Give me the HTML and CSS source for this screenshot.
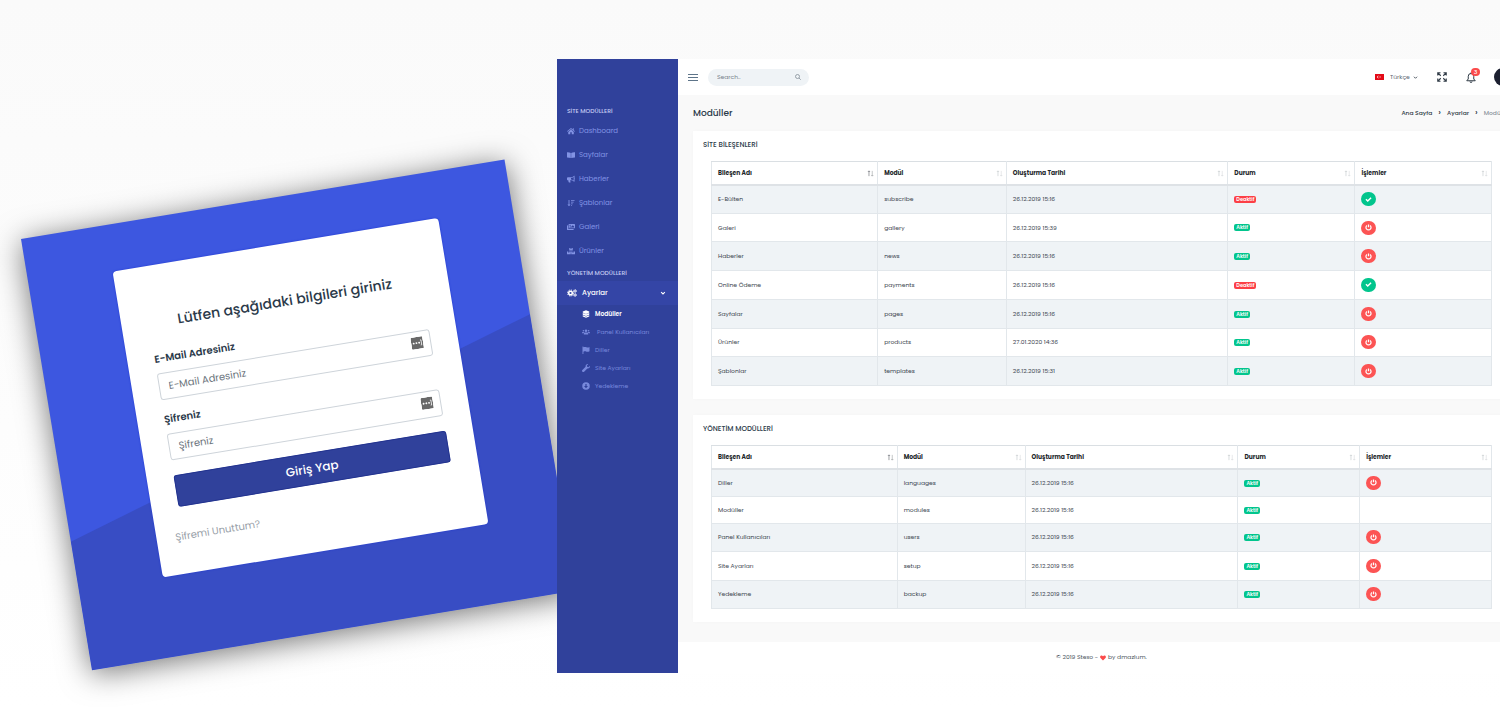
FILE: index.html
```html
<!DOCTYPE html>
<html lang="tr">
<head>
<meta charset="utf-8">
<title>Modüller</title>
<link rel="stylesheet" href="styles.css">
</head>
<body>
<svg class="sprite" aria-hidden="true">
  <symbol id="i-home" viewBox="0 0 18 16"><path d="M9 1 0 8.600l1.100 1.300L9 3.400l7.900 6.500L18 8.600l-2.800-2.300V2h-2.200v2.400zM9 4.800 2.800 10v5.200h4.500v-4.400h3.400v4.400h4.500V10z"/></symbol>
  <symbol id="i-book" viewBox="0 0 18 16"><path d="M8.500 3.300C6.500 2 3.500 1.700.6 1.800A.6.6 0 0 0 0 2.400v10.400c0 .4.300.6.600.6 2.700.1 5.700.4 7.900 1.600zM9.500 3.300c2-1.300 5-1.600 7.900-1.500.3 0 .6.300.6.600v10.400c0 .4-.3.600-.6.600-2.700.1-5.700.4-7.900 1.600z"/></symbol>
  <symbol id="i-horn" viewBox="0 0 18 16"><path fill-rule="evenodd" d="M17 6.500V1.800c0-.8-.7-1.200-1.300-.8C13.500 2.800 11 4 8 4H2C.9 4 0 4.900 0 6v3c0 1.100.9 2 2 2h1c-.1 1.500.3 3 1 4.300.2.400.5.700 1 .7h2.300c.8 0 1.200-.9.800-1.500C7.400 13.500 7 12.200 7.200 11H8c3 0 5.500 1.200 7.700 3 .6.400 1.300 0 1.300-.8V8.500a1.200 1.200 0 0 0 0-2zM15 11.500C13 10.200 10.700 9.300 9 9.200V5.800c1.700-.1 4-1 6-2.300z"/></symbol>
  <symbol id="i-sort" viewBox="0 0 18 16"><path d="M3.500 1h2v10.500H8L4.500 15.500 1 11.500h2.500zM9 1h8v2H9zM9 5h6v2H9zM9 9h4v2H9zM9 13h2v2H9z"/></symbol>
  <symbol id="i-images" viewBox="0 0 18 16"><path fill-rule="evenodd" d="M5 1h11.500c.8 0 1.500.7 1.500 1.500v7c0 .8-.7 1.500-1.500 1.500H5c-.8 0-1.500-.7-1.500-1.500v-7C3.500 1.700 4.200 1 5 1zm.5 8h10.500V7l-3-3-4 4-1.500-1.500-2 1.500zM7 3a1.300 1.300 0 1 0 0 2.600A1.300 1.300 0 0 0 7 3zM1.500 4H2.300v6.500c0 1 .8 1.800 1.800 1.800H15V13.500c0 .8-.7 1.500-1.500 1.500h-12C.7 15 0 14.300 0 13.500v-8C0 4.700.7 4 1.500 4z"/></symbol>
  <symbol id="i-boxes" viewBox="0 0 18 16"><path d="M5 1h2.800v2.800l1.200-.7 1.200.7V1H13v6H5zM0 9h2.800v2.800l1.200-.7 1.200.7V9H8.500v6.500H0zM9.500 9h2.800v2.800l1.200-.7 1.200.7V9H18v6.500H9.500z"/></symbol>
  <symbol id="i-cogs" viewBox="0 0 20 16"><g fill="none" stroke="currentColor"><circle cx="7" cy="8" r="3.600" stroke-width="3"/><circle cx="7" cy="8" r="6" stroke-width="2" stroke-dasharray="2.500 2.210"/><circle cx="16" cy="4" r="1.900" stroke-width="1.700"/><circle cx="16" cy="4" r="3.200" stroke-width="1.300" stroke-dasharray="1.700 1.650"/><circle cx="16" cy="12" r="1.900" stroke-width="1.700"/><circle cx="16" cy="12" r="3.200" stroke-width="1.300" stroke-dasharray="1.700 1.650"/></g></symbol>
  <symbol id="i-cube" viewBox="0 0 16 16"><path d="M8 .5 14.500 3v2.200L8 7.800 1.500 5.200V3zM1.500 6 8 8.600 14.500 6v3.500L8 12.100 1.500 9.500zM1.500 10.300 8 12.900l6.500-2.600V13L8 15.600 1.500 13z"/></symbol>
  <symbol id="i-users" viewBox="0 0 20 16"><circle cx="10" cy="5" r="3.200"/><circle cx="3.500" cy="5" r="2"/><circle cx="16.500" cy="5" r="2"/><path d="M4.500 14v-1.500C4.500 10 6.500 9 8 9h4c1.500 0 3.500 1 3.500 3.500V14zM0 11V9.500C0 8.500 1 7.800 2 7.800h3l1 .7C4.500 9.200 3.800 10 3.600 11zM20 11V9.500c0-1-1-1.700-2-1.700h-3l-1 .7c1.500.7 2.200 1.500 2.400 2.500z"/></symbol>
  <symbol id="i-flag" viewBox="0 0 16 16"><path d="M1 1h1.800v1.500C5 1.500 7 1.800 9 2.700c2 .7 4 .3 6-.7v8.500c-2 1.200-4 1.500-6 .8-2-.8-4-1-6.200.2V16H1z"/></symbol>
  <symbol id="i-wrench" viewBox="0 0 16 16"><path d="M15.700 3.700 13 6.300l-2.700-.6L9.700 3l2.700-2.700C9.500-.5 6.800 2 7.200 5.300L.7 11.800c-2 2.200 1.300 5.500 3.500 3.500l6.500-6.500C14 9.300 16.500 6.600 15.700 3.700z"/></symbol>
  <symbol id="i-down" viewBox="0 0 16 16"><path fill-rule="evenodd" d="M8 .5a7.500 7.500 0 1 1 0 15 7.500 7.500 0 0 1 0-15zM6.800 4v4H4l4 4.500L12 8H9.200V4z"/></symbol>
  <symbol id="i-check" viewBox="0 0 16 16"><path d="m1 8.500 2.300-2.300 3 3L12.700 2.800 15 5.100l-8.700 8.700z"/></symbol>
  <symbol id="i-power" viewBox="0 0 16 16"><path d="M4.500 3.200A5.800 5.800 0 1 0 11.500 3.200M8 1v6.500" fill="none" stroke="currentColor" stroke-width="2.800"/></symbol>
  <symbol id="i-chev" viewBox="0 0 16 16"><path d="m3 5.500 5 5 5-5" fill="none" stroke="currentColor" stroke-width="2.800"/></symbol>
  <symbol id="i-heart" viewBox="0 0 16 16"><path d="M8 14.500 1.300 7.800C-1 5 1 1.500 4 1.500c1.700 0 3 .8 4 2 1-1.200 2.300-2 4-2 3 0 5 3.500 2.700 6.300z"/></symbol>
  <symbol id="i-sorter" viewBox="0 0 16 16"><path d="M4.500 14V2M2 4.500 4.500 2 7 4.500"/><path opacity=".6" d="M12 2v12M9.500 11.500 12 14l2.500-2.500"/></symbol>
  <symbol id="i-key" viewBox="0 0 24 24"><rect width="24" height="24" rx="3" fill="#696969"/><circle cx="5" cy="12" r="1.900" fill="#fff"/><circle cx="10.500" cy="12" r="1.900" fill="#fff"/><circle cx="16" cy="12" r="1.900" fill="#fff"/><path d="M18.500 7h2v10h-2" fill="none" stroke="#fff" stroke-width="1.500"/></symbol>
</svg>

<div class="stage">
  <section class="login">
    <form class="login-card">
      <h1 class="login-title">Lütfen aşağıdaki bilgileri giriniz</h1>
      <label class="login-label" for="mail">E-Mail Adresiniz</label>
      <div class="login-field">
        <input class="login-input" id="mail" type="email" placeholder="E-Mail Adresiniz">
        <svg class="key"><use href="#i-key"/></svg>
      </div>
      <label class="login-label" for="pass">Şifreniz</label>
      <div class="login-field">
        <input class="login-input" id="pass" type="password" placeholder="Şifreniz">
        <svg class="key"><use href="#i-key"/></svg>
      </div>
      <button class="login-btn" type="button">Giriş Yap</button>
      <a class="forgot" href="#">Şifremi Unuttum?</a>
    </form>
  </section>

  <div class="dash">
    <nav class="side">
      <h2 class="side-head">SİTE MODÜLLERİ</h2>
      <a class="side-link" href="#"><svg class="ico"><use href="#i-home"/></svg>Dashboard</a>
      <a class="side-link" href="#"><svg class="ico"><use href="#i-book"/></svg>Sayfalar</a>
      <a class="side-link" href="#"><svg class="ico"><use href="#i-horn"/></svg>Haberler</a>
      <a class="side-link" href="#"><svg class="ico"><use href="#i-sort"/></svg>Şablonlar</a>
      <a class="side-link" href="#"><svg class="ico"><use href="#i-images"/></svg>Galeri</a>
      <a class="side-link" href="#"><svg class="ico"><use href="#i-boxes"/></svg>Ürünler</a>
      <h2 class="side-head">YÖNETİM MODÜLLERİ</h2>
      <a class="side-link open" href="#"><svg class="ico wide"><use href="#i-cogs"/></svg>Ayarlar<svg class="chev"><use href="#i-chev"/></svg></a>
      <a class="sub-link current" href="#"><svg class="ico"><use href="#i-cube"/></svg>Modüller</a>
      <a class="sub-link spaced" href="#"><svg class="ico"><use href="#i-users"/></svg>Panel Kullanıcıları</a>
      <a class="sub-link" href="#"><svg class="ico"><use href="#i-flag"/></svg>Diller</a>
      <a class="sub-link" href="#"><svg class="ico"><use href="#i-wrench"/></svg>Site Ayarları</a>
      <a class="sub-link" href="#"><svg class="ico"><use href="#i-down"/></svg>Yedekleme</a>
    </nav>

    <div class="main">
      <header class="top">
        <button class="icon-btn menu" type="button" aria-label="Menü"><svg viewBox="0 0 10 8"><path d="M0 1.500h10M0 4.500h10M0 7.500h10" fill="none" stroke="#5d7489" stroke-width="1"/></svg></button>
        <form class="search">
          <input class="search-input" type="text" placeholder="Search.." aria-label="Search">
          <button class="icon-btn glass" type="button" aria-label="Ara"><svg viewBox="0 0 12 12"><path d="M5 1a4 4 0 1 1 0 8 4 4 0 0 1 0-8M8 8l3.500 3.500" fill="none" stroke="#7d8893" stroke-width="1.500"/></svg></button>
        </form>
        <div class="top-right">
          <label class="lang"><svg class="tr-flag" viewBox="0 0 18 12"><path fill="#e30a17" d="M0 0h18v12H0z"/><circle cx="7" cy="6" r="2.600" fill="#fff"/><circle cx="7.800" cy="6" r="2.100" fill="#e30a17"/><path fill="#fff" d="m9.500 6 2.600-1-1.600 2.200V4.800L12.100 7z"/></svg>
            <select class="lang-select" aria-label="Dil"><option>Türkçe</option></select><svg class="lang-chev"><use href="#i-chev"/></svg></label>
          <button class="icon-btn full" type="button" aria-label="Tam ekran"><svg viewBox="0 0 20 20"><g fill="none" stroke="#2f3a45" stroke-width="2.200"><path d="M1.500 7V1.500H7M1.500 1.500 7.500 7.500M13 1.500h5.500V7M18.500 1.500l-6 6M1.500 13v5.500H7M1.500 18.500l6-6M18.500 13v5.500H13M18.500 18.500l-6-6"/></g></svg></button>
          <button class="icon-btn bell" type="button" aria-label="Bildirimler"><svg viewBox="0 0 20 22"><path d="M10 1v2M1.500 17.500h17L15.500 14V8.500a5.500 5.500 0 0 0-11 0V14zM8 19a2 2 0 0 0 4 0" fill="none" stroke="#2f3a45" stroke-width="2"/></svg><span class="count">3</span></button>
          <span class="avatar"></span>
        </div>
      </header>

      <main class="content">
        <div class="crumb-row">
          <h1 class="page-title">Modüller</h1>
          <ol class="crumbs"><li><a href="#">Ana Sayfa</a></li><li><a href="#">Ayarlar</a></li><li class="here">Modüller</li></ol>
        </div>

        <section class="card">
          <h2 class="card-title">SİTE BİLEŞENLERİ</h2>
          <table class="grid site">
            <thead><tr>
              <th class="c1 sorted">Bileşen Adı<svg class="sorter"><use href="#i-sorter"/></svg></th><th class="c2">Modül<svg class="sorter"><use href="#i-sorter"/></svg></th><th class="c3">Oluşturma Tarihi<svg class="sorter"><use href="#i-sorter"/></svg></th><th class="c4">Durum<svg class="sorter"><use href="#i-sorter"/></svg></th><th class="c5">İşlemler<svg class="sorter"><use href="#i-sorter"/></svg></th>
            </tr></thead>
            <tbody>
              <tr><td>E-Bülten</td><td>subscribe</td><td>26.12.2019 15:16</td><td><span class="tag off">Deaktif</span></td><td><button class="act go" type="button" aria-label="Aç"><svg><use href="#i-check"/></svg></button></td></tr>
              <tr><td>Galeri</td><td>gallery</td><td>26.12.2019 15:39</td><td><span class="tag">Aktif</span></td><td><button class="act" type="button" aria-label="Kapat"><svg><use href="#i-power"/></svg></button></td></tr>
              <tr><td>Haberler</td><td>news</td><td>26.12.2019 15:16</td><td><span class="tag">Aktif</span></td><td><button class="act" type="button" aria-label="Kapat"><svg><use href="#i-power"/></svg></button></td></tr>
              <tr><td>Online Ödeme</td><td>payments</td><td>26.12.2019 15:16</td><td><span class="tag off">Deaktif</span></td><td><button class="act go" type="button" aria-label="Aç"><svg><use href="#i-check"/></svg></button></td></tr>
              <tr><td>Sayfalar</td><td>pages</td><td>26.12.2019 15:16</td><td><span class="tag">Aktif</span></td><td><button class="act" type="button" aria-label="Kapat"><svg><use href="#i-power"/></svg></button></td></tr>
              <tr><td>Ürünler</td><td>products</td><td>27.01.2020 14:36</td><td><span class="tag">Aktif</span></td><td><button class="act" type="button" aria-label="Kapat"><svg><use href="#i-power"/></svg></button></td></tr>
              <tr><td>Şablonlar</td><td>templates</td><td>26.12.2019 15:31</td><td><span class="tag">Aktif</span></td><td><button class="act" type="button" aria-label="Kapat"><svg><use href="#i-power"/></svg></button></td></tr>
            </tbody>
          </table>
        </section>

        <section class="card">
          <h2 class="card-title">YÖNETİM MODÜLLERİ</h2>
          <table class="grid admin">
            <thead><tr>
              <th class="c1 sorted">Bileşen Adı<svg class="sorter"><use href="#i-sorter"/></svg></th><th class="c2">Modül<svg class="sorter"><use href="#i-sorter"/></svg></th><th class="c3">Oluşturma Tarihi<svg class="sorter"><use href="#i-sorter"/></svg></th><th class="c4">Durum<svg class="sorter"><use href="#i-sorter"/></svg></th><th class="c5">İşlemler<svg class="sorter"><use href="#i-sorter"/></svg></th>
            </tr></thead>
            <tbody>
              <tr><td>Diller</td><td>languages</td><td>26.12.2019 15:16</td><td><span class="tag">Aktif</span></td><td><button class="act" type="button" aria-label="Kapat"><svg><use href="#i-power"/></svg></button></td></tr>
              <tr class="short"><td>Modüller</td><td>modules</td><td>26.12.2019 15:16</td><td><span class="tag">Aktif</span></td><td></td></tr>
              <tr><td>Panel Kullanıcıları</td><td>users</td><td>26.12.2019 15:16</td><td><span class="tag">Aktif</span></td><td><button class="act" type="button" aria-label="Kapat"><svg><use href="#i-power"/></svg></button></td></tr>
              <tr><td>Site Ayarları</td><td>setup</td><td>26.12.2019 15:16</td><td><span class="tag">Aktif</span></td><td><button class="act" type="button" aria-label="Kapat"><svg><use href="#i-power"/></svg></button></td></tr>
              <tr><td>Yedekleme</td><td>backup</td><td>26.12.2019 15:16</td><td><span class="tag">Aktif</span></td><td><button class="act" type="button" aria-label="Kapat"><svg><use href="#i-power"/></svg></button></td></tr>
            </tbody>
          </table>
        </section>
      </main>

      <footer class="foot">© 2019 Stexo - <svg class="heart"><use href="#i-heart"/></svg> by dmazlum.</footer>
    </div>
  </div>
</div>
</body>
</html>
```

FILE: styles.css
```css
* { box-sizing: border-box; }
body {
  margin: 0;
  min-height: 100vh;
  background: linear-gradient(#fafafa, #fff);
  font-family: Poppins, Inter, "Noto Sans", sans-serif;
  font-size: 7px;
  color: #3c4650;
}
h1, h2, ol { margin: 0; padding: 0; font-weight: 500; }
a { color: inherit; text-decoration: none; }
button, input, select { font: inherit; color: inherit; border: 0; padding: 0; margin: 0; background: none; }
svg { display: block; fill: currentColor; }
.sprite { position: absolute; width: 0; height: 0; }

.stage {
  display: grid;
  grid-template-columns: 557px minmax(0, 1fr);
  align-items: start;
  min-height: 100vh;
  padding-top: 59px;
  overflow: hidden;
}

/* tilted login panel */
.login {
  position: relative;
  width: 490px;
  margin: 180px 0 0 21px;
  padding: 47px 75px 80px 85px;
  background: #3d57e0;
  box-shadow: 0 4px 30px rgba(0, 0, 0, .55);
  transform: rotate(-9.35deg);
  transform-origin: 0 0;
}
.login::before {
  content: "";
  position: absolute;
  inset: 0;
  background: #384dc4;
  clip-path: polygon(0 70.2%, 100% 35.9%, 100% 100%, 0 100%);
}
.login-card {
  position: relative;
  display: flex;
  flex-direction: column;
  height: 310px;
  padding: 47px 27px 0;
  border-radius: 4px;
  background: #fff;
  box-shadow: 0 0 2px #1c34cf;
}
.login-title {
  font-size: 14px;
  line-height: 20px;
  text-align: center;
  white-space: nowrap;
  color: #2b3a4a;
  font-weight: 500;
  margin-bottom: 20px;
}
.login-label { font-size: 10px; line-height: 14px; font-weight: 600; color: #2b3a4a; }
.login-field { position: relative; display: flex; margin: 7px 0 13px; }
.login-input {
  width: 100%;
  height: 27px;
  padding: 0 9px;
  border: 1px solid #ced4da;
  border-radius: 3px;
  font-size: 10px;
}
.login-input::placeholder { color: #6c757d; opacity: 1; }
.key { position: absolute; right: 8px; top: 6px; width: 12px; height: 12px; }
.login-btn {
  height: 32px;
  margin-top: 2px;
  flex: none;
  border-radius: 3px;
  background: #30419b;
  box-shadow: inset 0 0 0 1px #24348f;
  color: #fff;
  font-size: 12px;
  font-weight: 500;
}
.forgot { margin: 22px 0 0 -8px; font-size: 10px; line-height: 16px; color: #98a0a8; }

/* dashboard window, wider than the viewport */
.dash {
  position: relative;
  display: flex;
  margin-right: -25px;
  background: #f9f9f9;
}
.side {
  flex: none;
  width: 121px;
  padding-top: 44px;
  background: #30419b;
  color: #8c9bf0;
}
.side-head { padding-left: 10px; font-size: 6px; line-height: 16px; color: #c3cbf2; }
.side-link {
  display: flex;
  align-items: center;
  gap: 4px;
  height: 24px;
  padding: 0 12px 0 10px;
  color: #8293e4;
}
.side-link + .side-head { margin-top: 2px; }
.ico { width: 8px; height: 8px; flex: none; }
.wide { width: 10px; }
.open { gap: 5px; background: #3445a6; color: #fff; font-weight: 500; }
.chev { width: 6px; height: 6px; margin-left: auto; }
.sub-link {
  display: flex;
  align-items: center;
  gap: 5px;
  height: 18px;
  padding-left: 25px;
  font-size: 6px;
  color: #7889dc;
}
.spaced { gap: 7px; }
.current { color: #fff; font-weight: 600; }

.main { flex: 1; min-width: 0; }
.top {
  display: flex;
  align-items: center;
  height: 36px;
  padding: 0 13px 0 10px;
  background: #fff;
}
.icon-btn { display: block; flex: none; }
.menu { width: 10px; height: 8px; }
.search {
  display: flex;
  align-items: center;
  width: 101px;
  height: 17px;
  margin-left: 10px;
  padding: 0 8px 0 9px;
  border-radius: 9px;
  background: #eff3f6;
}
.search-input { flex: 1; min-width: 0; color: #6c757d; font-size: 6px; }
.search-input::placeholder { color: #75808a; opacity: 1; }
.glass { width: 6px; height: 6px; }
.top-right { display: flex; align-items: center; margin-left: auto; }
.lang { display: flex; align-items: center; }
.tr-flag { width: 9px; height: 6px; margin-right: 6px; }
.lang-select { appearance: none; width: 23px; font-size: 6px; color: #5b6670; }
.lang-chev { width: 5px; height: 5px; }
.full { width: 10px; height: 10px; margin-left: 19px; }
.bell { position: relative; width: 10px; height: 11px; margin-left: 19px; }
.count {
  position: absolute;
  left: 5px;
  top: -4px;
  width: 9px;
  height: 8px;
  border-radius: 4px;
  background: #fb4b4b;
  color: #fff;
  font-size: 6px;
  font-weight: 500;
  line-height: 8px;
  text-align: center;
}
.avatar { width: 18px; height: 18px; margin-left: 18px; border-radius: 50%; background: #1c2030; }

.content { padding: 0 15px 20px; }
.crumb-row { display: flex; align-items: center; justify-content: space-between; height: 36px; }
.page-title { font-size: 9px; line-height: 14px; color: #2b3a4a; }
.crumbs { display: flex; list-style: none; font-size: 6px; line-height: 10px; color: #2f3a45; }
.crumbs li { display: flex; }
.crumbs li + li::before { content: "›"; font-size: 9px; line-height: 9px; margin: 0 6px; color: #2f3a45; }
.crumbs .here { color: #8a939b; }

.card {
  padding: 7px 18px 13px;
  background: #fff;
  box-shadow: 0 0 4px rgba(0, 0, 0, .02);
}
.card + .card { margin-top: 16px; }
.card-title { margin: 0 0 9px -8px; font-size: 7px; line-height: 14px; color: #2b3a4a; }
.grid { width: 100%; table-layout: fixed; border-collapse: collapse; line-height: 10px; font-size: 6px; }
.site { height: 225px; }
.admin { height: 164px; }
.grid th, .grid td { padding: 0 6px; border: 1px solid #e2e7eb; text-align: left; vertical-align: middle; }
.grid th {
  position: relative;
  height: 23px;
  border-top-color: #dadfe3;
  border-bottom: 2px solid #dee2e6;
  font-weight: 700;
  color: #212529;
}
.grid td { height: 28px; }
.grid .short td { height: 26px; }
.grid tbody tr:nth-child(odd) { background: #eff3f6; }
.site .c1 { width: 21.3%; }
.site .c2 { width: 16.5%; }
.site .c3 { width: 28.4%; }
.site .c4 { width: 16.3%; }
.admin .c1 { width: 23.8%; }
.admin .c2 { width: 16.4%; }
.admin .c3 { width: 27.3%; }
.admin .c4 { width: 15.6%; }
.sorter {
  position: absolute;
  right: 3px;
  top: 8px;
  width: 7px;
  height: 7px;
  fill: none;
  stroke: #c5c9cc;
  stroke-width: 1.5;
}
.sorted .sorter { stroke: #6b7075; }
.tag {
  display: inline-block;
  padding: 0 2px;
  border-radius: 2px;
  background: #02c58d;
  color: #fff;
  font-size: 5px;
  line-height: 7px;
  font-weight: 600;
  vertical-align: middle;
}
.off { background: #fc3f46; }
.act {
  display: flex;
  align-items: center;
  justify-content: center;
  width: 15px;
  height: 14px;
  border-radius: 7px;
  background: #fc5454;
  color: #fff;
}
.act svg { width: 7px; height: 7px; }
.go { background: #02c58d; }

.foot {
  display: flex;
  align-items: center;
  justify-content: center;
  gap: 2px;
  height: 31px;
  background: #fff;
  font-size: 6px;
  color: #4a5560;
}
.heart { width: 6px; height: 6px; color: #fb4b4b; }
```
